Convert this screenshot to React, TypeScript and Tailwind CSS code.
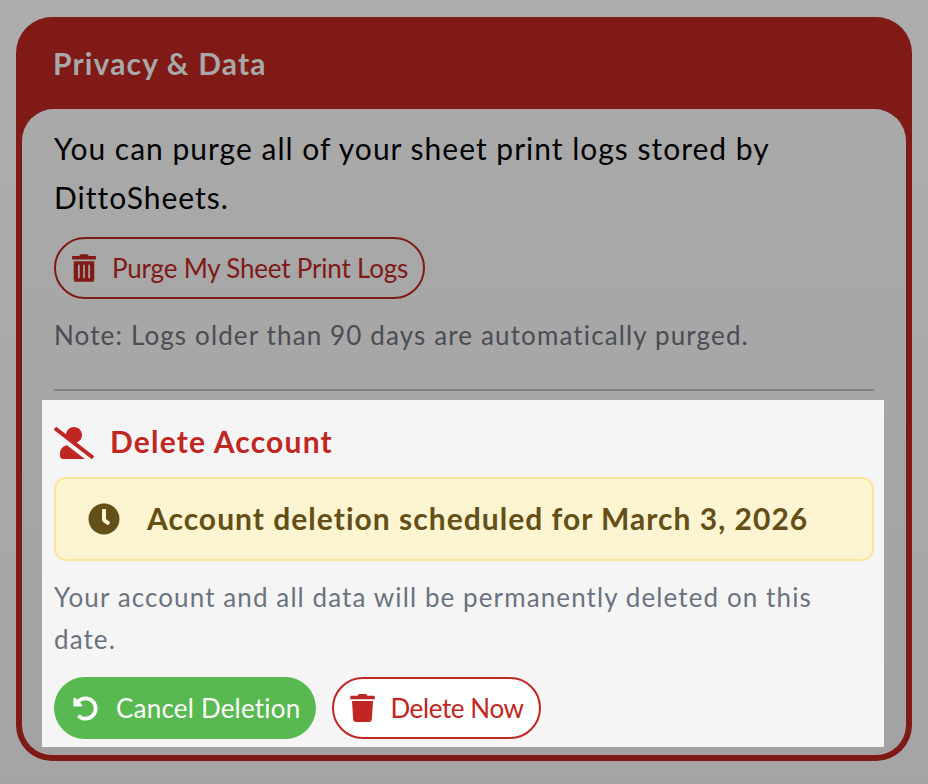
import { FaClock, FaTrash, FaTrashAlt, FaUndoAlt, FaUserSlash } from 'react-icons/fa'

export default function App() {
  return (
    <div className="w-[928px] h-[784px] overflow-hidden pt-[17px] px-4 bg-gradient-to-b from-[#adadad] to-[#a5a5a5] font-['Lato',sans-serif]">
      <div className="h-[744px] rounded-[36px] border-[6px] border-t-0 border-[#7f1a16] bg-[#7f1a16] overflow-hidden flex flex-col">
        {/* Header */}
        <div className="h-[92px] shrink-0 pl-8 pt-[25px]">
          <h2 className="text-[30px] leading-[42px] font-bold tracking-[1.15px] text-[#a8a8a8] -ml-px">Privacy &amp; Data</h2>
        </div>

        {/* Body */}
        <div className="flex-1 rounded-t-[32px] bg-gradient-to-b from-[#a9a9a9] to-[#a3a3a3] px-8 pt-[15px]">
          <p className="text-[30px] leading-[49px] tracking-[1px] text-black">
            You can purge all of your sheet print logs stored by DittoSheets.
          </p>
          <button className="mt-[15px] h-[62px] pl-4 pr-[15px] rounded-full border-2 border-[#7f1a16] flex items-center gap-4 text-[#7f1a16] text-[26px] tracking-[-0.2px]">
            <FaTrashAlt className="w-[24px] h-[28px]" />
            Purge My Sheet Print Logs
          </button>
          <p className="mt-[15px] text-[26px] leading-[42px] tracking-[1.13px] text-[#4b4d55]">
            Note: Logs older than 90 days are automatically purged.
          </p>
          <div className="mt-[33px] h-[2px] bg-[#808080]" />

          {/* Spotlighted delete section */}
          <div className="mt-[9px] -ml-3 -mr-2.5 h-[347px] pl-3 pr-2.5 pt-[22px] bg-[#f5f5f5]">
            <div className="flex items-center gap-4 h-[42px] text-[#c02622]">
              <FaUserSlash className="w-[40px] h-[32px]" />
              <h3 className="text-[30px] font-bold tracking-[1.2px] pb-[3px]">Delete Account</h3>
            </div>
            <div className="mt-[13px] h-[84px] rounded-[12px] border-2 border-[#fbe6a0] bg-[#fdf4d2] flex items-center pl-[32px] gap-[27px] text-[#644f16]">
              <FaClock className="w-[32px] h-[32px]" />
              <span className="text-[30px] font-bold tracking-[1.02px] pb-[2px]">Account deletion scheduled for March 3, 2026</span>
            </div>
            <p className="mt-[15px] text-[26px] leading-[42px] tracking-[1.1px] text-[#6b7280]">
              Your account and all data will be permanently deleted on this date.
            </p>
            <div className="mt-[17px] flex gap-4">
              <button className="h-[62px] pl-[19px] pr-4 rounded-full bg-[#57b94f] flex items-center gap-[18px] text-white text-[26px] tracking-[0.2px]">
                <FaUndoAlt className="w-[25px] h-[25px]" />
                Cancel Deletion
              </button>
              <button className="h-[62px] pl-4 pr-[15px] rounded-full border-2 border-[#c02622] bg-white flex items-center gap-[15px] text-[#c02622] text-[26px] tracking-[-0.4px]">
                <FaTrash className="w-[25px] h-[28px]" />
                Delete Now
              </button>
            </div>
          </div>
        </div>
      </div>
    </div>
  )
}
